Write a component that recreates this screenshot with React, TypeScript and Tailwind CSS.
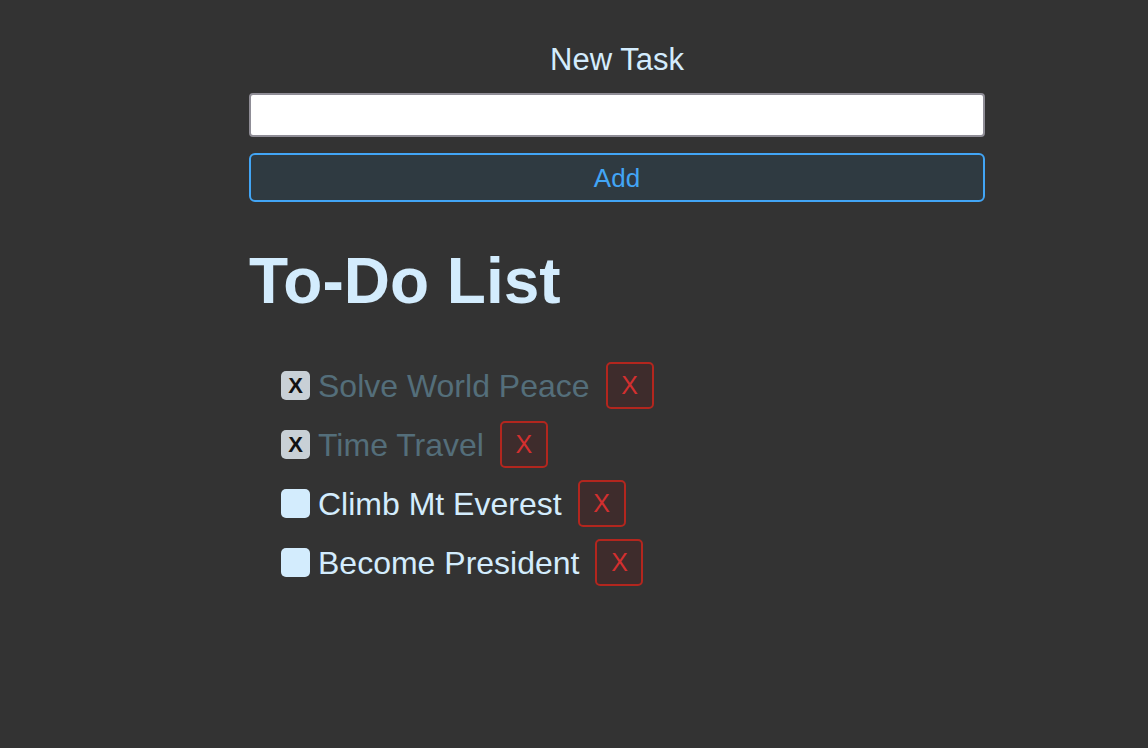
import React from "react";

const items = [
  { text: "Solve World Peace", done: true },
  { text: "Time Travel", done: true },
  { text: "Climb Mt Everest", done: false },
  { text: "Become President", done: false },
];

export default function App() {
  return (
    <div
      className="min-h-[748px] w-full bg-[#333333]"
      style={{ fontFamily: '"Liberation Sans", Arial, Helvetica, sans-serif' }}
    >
      <div className="ml-[249px] w-[736px] pt-[42px]">
        <div className="text-center text-[31px] leading-[36px] text-[#d3ecfd]">New Task</div>
        <input
          type="text"
          className="mt-[15px] block h-[44px] w-full rounded-[4px] border-2 border-[#8f8d96] bg-white outline-none"
        />
        <button className="mt-[16px] block h-[49px] w-full rounded-[6px] border-2 border-[#42a5f5] bg-[#2f3a41] text-[26px] leading-none text-[#42a5f5]">
          Add
        </button>
        <h1 className="mt-[42px] text-[64px] font-bold leading-[74px] text-[#d3ecfd]">To-Do List</h1>
        <ul className="mt-[44px] flex flex-col gap-[12px] pl-[32px]">
          {items.map((it) => (
            <li key={it.text} className="flex h-[47px] items-center">
              {it.done ? (
                <span className="flex h-[29px] w-[29px] items-center justify-center rounded-[5px] bg-[#c8d0d6] text-[22px] font-bold leading-none text-[#111111]">
                  X
                </span>
              ) : (
                <span className="block h-[29px] w-[29px] rounded-[5px] bg-[#d3ecfd]" />
              )}
              <span
                className={
                  "ml-[8px] text-[32px] leading-none " +
                  (it.done ? "text-[#546e7a]" : "text-[#d3ecfd]")
                }
              >
                {it.text}
              </span>
              <button className="ml-[16px] flex h-[47px] w-[48px] items-center justify-center rounded-[5px] border-2 border-[#b3261e] bg-[#3e2c2c] text-[25px] leading-none text-[#d32f2f]">
                X
              </button>
            </li>
          ))}
        </ul>
      </div>
    </div>
  );
}
